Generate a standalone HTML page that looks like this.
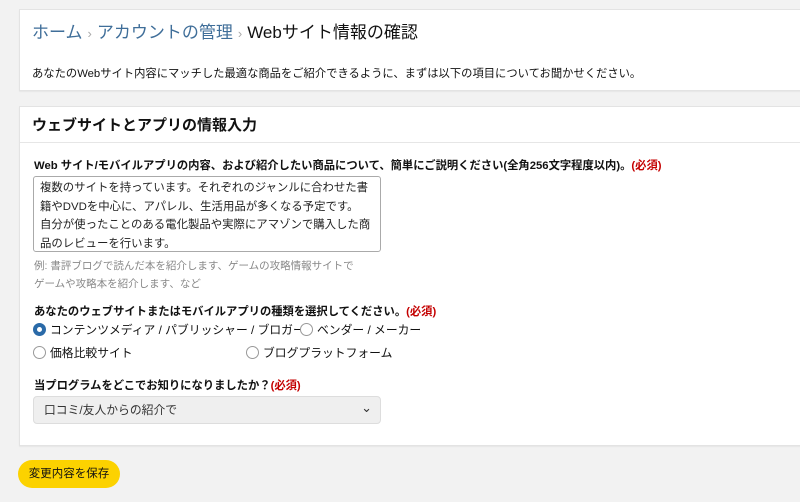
<!DOCTYPE html>
<html><head><meta charset="utf-8"><style>
*{box-sizing:border-box;margin:0;padding:0}
body{width:800px;height:502px;background:#f2f2f2;font-family:"Liberation Sans","Noto Sans CJK JP",sans-serif;color:#111;position:relative;overflow:hidden}
.p{position:absolute;left:19px;width:790px;background:#fff;border:1px solid #e3e3e3;box-shadow:0 1px 1px rgba(0,0,0,.05)}
.a{position:absolute;white-space:nowrap}
.bc{font-size:17px;color:#3f6e99}
.sep{color:#aaa;font-size:13px;margin:0 5px}
.req{color:#c40000;font-weight:bold}
.r{display:inline-block;width:13px;height:13px;border:1px solid #999;border-radius:50%;vertical-align:-2px;margin-right:4px;background:#fff}
.r.on{border:4px solid #2a6aa8}
</style></head><body>
<div class="p" style="top:9px;height:82px">
 <div class="a bc" style="left:12px;top:8px">ホーム<span class="sep">›</span>アカウントの管理<span class="sep">›</span><span style="color:#111">Webサイト情報の確認</span></div>
 <div class="a" style="left:12px;top:55px;font-size:11.3px">あなたのWebサイト内容にマッチした最適な商品をご紹介できるように、まずは以下の項目についてお聞かせください。</div>
</div>
<div class="p" style="top:106px;height:340px">
 <div style="height:36px;border-bottom:1px solid #e6e6e6"></div>
 <div class="a" style="left:12px;top:7px;font-size:15px;font-weight:bold">ウェブサイトとアプリの情報入力</div>
 <div class="a" style="left:14px;top:50px;font-size:11.3px;font-weight:bold">Web サイト/モバイルアプリの内容、および紹介したい商品について、簡単にご説明ください(全角256文字程度以内)。<span class="req">(必須)</span></div>
 <div class="a" style="left:13px;top:69px;width:348px;height:76px;border:1px solid #aaa;border-radius:3px;padding:2px 6px;font-size:11.4px;line-height:18.5px;color:#222;overflow:hidden">複数のサイトを持っています。それぞれのジャンルに合わせた書<br>籍やDVDを中心に、アパレル、生活用品が多くなる予定です。<br>自分が使ったことのある電化製品や実際にアマゾンで購入した商<br>品のレビューを行います。</div>
 <div class="a" style="left:14px;top:150px;font-size:10.5px;line-height:18px;color:#888">例: 書評ブログで読んだ本を紹介します、ゲームの攻略情報サイトで<br>ゲームや攻略本を紹介します、など</div>
 <div class="a" style="left:14px;top:196px;font-size:11.3px;font-weight:bold">あなたのウェブサイトまたはモバイルアプリの種類を選択してください。<span class="req">(必須)</span></div>
 <div class="a" style="left:13px;top:214px;font-size:11.8px"><span class="r on"></span>コンテンツメディア / パブリッシャー / ブロガー</div>
 <div class="a" style="left:280px;top:214px;font-size:11.8px"><span class="r"></span>ベンダー / メーカー</div>
 <div class="a" style="left:13px;top:237px;font-size:11.8px"><span class="r"></span>価格比較サイト</div>
 <div class="a" style="left:226px;top:237px;font-size:11.8px"><span class="r"></span>ブログプラットフォーム</div>
 <div class="a" style="left:14px;top:270px;font-size:11.3px;font-weight:bold">当プログラムをどこでお知りになりましたか？<span class="req">(必須)</span></div>
 <div class="a" style="left:13px;top:289px;width:348px;height:28px;border:1px solid #ddd;border-radius:4px;background:#efefef;padding:4px 10px;font-size:11.8px;color:#333">口コミ/友人からの紹介で<span style="position:absolute;right:8px;top:3px;font-size:13px">⌄</span></div>
</div>
<div class="a" style="left:18px;top:460px;width:102px;height:28px;background:#fcd200;border-radius:14px;font-size:11.5px;line-height:28px;text-align:center">変更内容を保存</div>
</body></html>
